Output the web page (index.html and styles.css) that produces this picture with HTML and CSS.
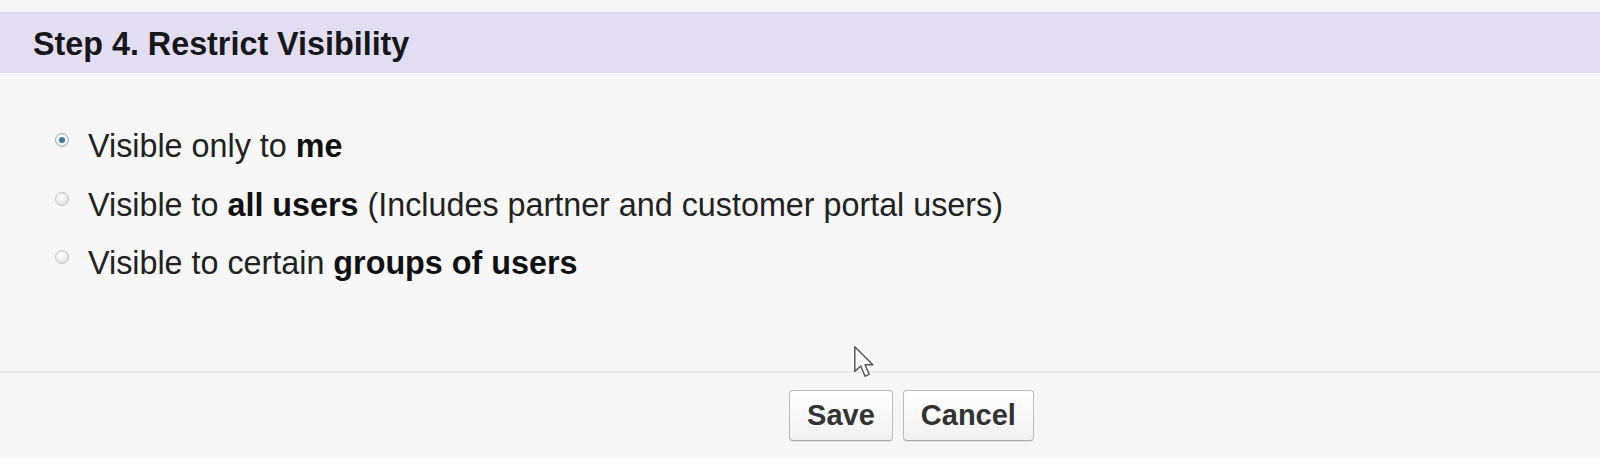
FILE: index.html
```html
<!DOCTYPE html>
<html lang="en">
  <head>
    <meta charset="UTF-8" />
    <title>Restrict Visibility</title>
    <link rel="stylesheet" href="styles.css">
  </head>
  <body>
    <div class="page">
      <div class="step-head">
        <h2>Step 4. Restrict Visibility</h2>
      </div>
      <ul class="options">
        <li>
          <span class="radio checked"></span>
          <span>Visible only to <b>me</b></span>
        </li>
        <li>
          <span class="radio"></span>
          <span>Visible to <b>all users</b> (Includes partner and customer portal users)</span>
        </li>
        <li>
          <span class="radio"></span>
          <span>Visible to certain <b>groups of users</b></span>
        </li>
      </ul>
      <div class="buttons">
        <button class="btn">Save</button>
        <button class="btn">Cancel</button>
      </div>
      <div class="bottom"></div>
    </div>
    <svg class="cursor" width="24" height="36" viewBox="0 0 20 30">
      <path d="M1.5 1.5 L1.5 22 L6.5 17.5 L10 26 L13.5 24.5 L10 16.5 L16.5 16.5 Z" fill="#fff" stroke="#555" stroke-width="1.2" stroke-linejoin="round"/>
    </svg>
  </body>
</html>
```

FILE: styles.css
```css
* {
  margin: 0;
  padding: 0;
  list-style: none;
}
body {
  background-color: #f7f7f7;
  font-family: "Liberation Sans", Arial, sans-serif;
  color: #222;
  position: relative;
  height: 463px;
  overflow: hidden;
}

.page {
  padding-top: 12px;
}

.step-head {
  height: 60px;
  border-top: 1px solid #dad6ea;
  background-color: #e2ddf0;
  display: flex;
  align-items: center;
  padding: 3px 0 0 33px;
  box-sizing: border-box;
  height: 61px;
}
.step-head h2 {
  font-size: 32.3px;
  font-weight: 700;
  color: #17171b;
}

.options {
  padding: 44px 0 0 55px;
  height: 254px;
  border-bottom: 2px solid #e8e8e8;
}
.options li {
  display: flex;
  align-items: flex-start;
  font-size: 32.3px;
  line-height: 58.5px;
  color: #222;
}
.options b {
  color: #111;
}

.radio {
  width: 12px;
  height: 12px;
  border-radius: 50%;
  border: 1px solid #c4c4c4;
  background: radial-gradient(circle at 40% 35%, #fff, #dcdcdc);
  margin: 16px 19px 0 0;
  flex-shrink: 0;
  position: relative;
}
.radio.checked {
  border-color: #9fb4be;
}
.radio.checked::after {
  content: "";
  position: absolute;
  left: 3px;
  top: 3px;
  width: 6px;
  height: 6px;
  border-radius: 50%;
  background-color: #3b7f95;
}

.buttons {
  display: flex;
  justify-content: center;
  gap: 10px;
  padding: 16px 0 17px 223px;
  border-top: 1px solid #fbfbfb;
}
.btn {
  height: 51px;
  padding: 0 17px;
  font-family: "Liberation Sans", Arial, sans-serif;
  font-size: 29px;
  font-weight: 700;
  color: #333;
  background: linear-gradient(#ffffff, #f1f1f1);
  border: 1px solid #bdbdbd;
  border-bottom-color: #a8a8a8;
  border-radius: 4px;
  box-shadow: 0 1px 1px rgba(0, 0, 0, .08);
}

.bottom {
  height: 10px;
  background-color: #fdfdfd;
}

.cursor {
  position: absolute;
  left: 853px;
  top: 345px;
}
```
